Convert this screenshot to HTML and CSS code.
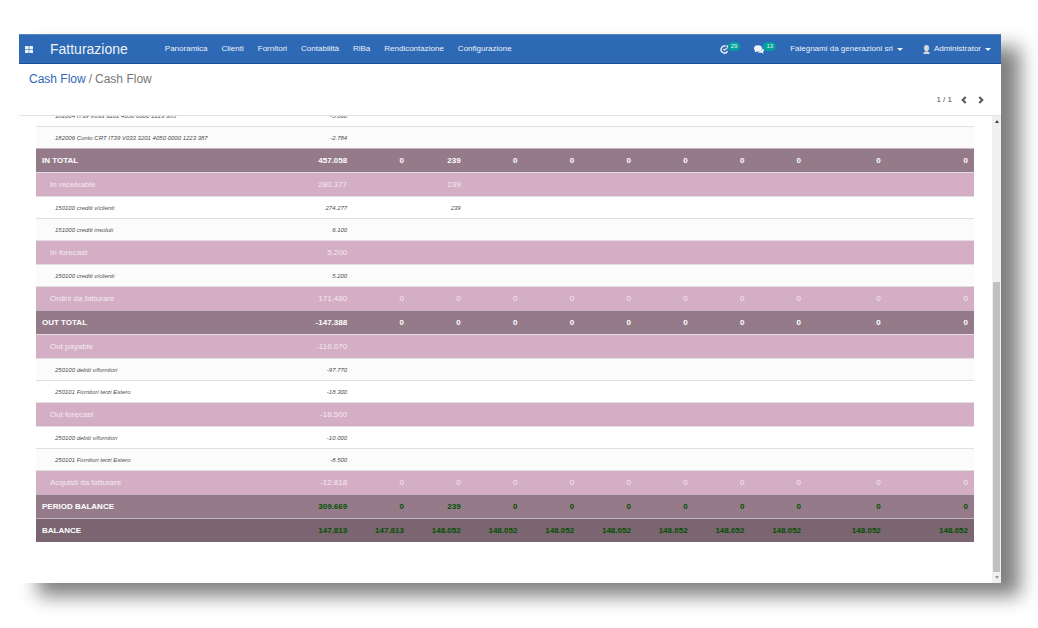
FILE: index.html
```html
<!DOCTYPE html>
<html lang="it">
<head>
<meta charset="utf-8">
<title>Fatturazione - Cash Flow</title>
<link rel="stylesheet" href="styles.css">
</head>
<body>
<div class="window">
  <header class="navbar">
    <button class="apps" aria-label="Applicazioni">
      <svg width="8" height="7" viewBox="0 0 8 7" fill="currentColor"><rect width="3.700" height="3.200" rx=".5"/><rect x="4.300" width="3.700" height="3.200" rx=".5"/><rect y="3.800" width="3.700" height="3.200" rx=".5"/><rect x="4.300" y="3.800" width="3.700" height="3.200" rx=".5"/></svg>
    </button>
    <a class="brand" href="#">Fatturazione</a>
    <nav class="menu">
      <a href="#">Panoramica</a>
      <a href="#">Clienti</a>
      <a href="#">Fornitori</a>
      <a href="#">Contabilità</a>
      <a href="#">RiBa</a>
      <a href="#">Rendicontazione</a>
      <a href="#">Configurazione</a>
    </nav>
    <div class="systray">
      <button class="tray" aria-label="Attività">
        <svg width="9" height="9" viewBox="0 0 9 9" fill="none" stroke="currentColor"><path d="M5.600 1.200A3.500 3.500 0 1 0 7.600 6.200" stroke-width="1.400"/><path d="M3.300 4l1.100 1.200L7.600 2.600" stroke-width="1.100"/><path d="M5.500.3 8 .5 7.800 3z" fill="currentColor" stroke="none"/></svg>
        <span class="badge">29</span>
      </button>
      <button class="tray" aria-label="Messaggi">
        <svg width="10" height="9" viewBox="0 0 10 9" fill="currentColor"><ellipse cx="4" cy="3.400" rx="4" ry="3.100"/><path d="M1.600 5 .8 7.400 4 6z"/><path d="M8.400 3.200C10.300 4 10.400 6 9 7l.7 1.700L7.400 7.800C5.600 8 4.300 7.500 3.800 6.900 6.600 6.900 8.500 5.500 8.400 3.200z"/></svg>
        <span class="badge">13</span>
      </button>
      <button class="drop company">Falegnami da generazioni srl <i class="caret"></i></button>
      <button class="drop user">
        <svg width="7" height="9" viewBox="0 0 7 9" fill="#d5d9df"><ellipse cx="3.500" cy="3" rx="2.600" ry="3"/><path d="M2.300 5h2.400v1.600H2.300z"/><path d="M.3 9C.3 7 1.500 6.400 3.500 6.400S6.700 7 6.700 9z"/></svg>
        Administrator <i class="caret"></i></button>
    </div>
  </header>

  <section class="control-panel">
    <nav class="breadcrumb"><a href="#">Cash Flow</a><span>/</span><span>Cash Flow</span></nav>
    <div class="pager">
      <span>1 / 1</span>
      <button aria-label="Precedente"><svg width="6" height="8" viewBox="0 0 6 8"><path d="M4.700 1 1.700 4l3 3"/></svg></button>
      <button aria-label="Successivo"><svg width="6" height="8" viewBox="0 0 6 8"><path d="M1.300 1l3 3-3 3"/></svg></button>
    </div>
  </section>

  <main class="content">
    <div class="report">
      <table class="cashflow">
        <colgroup>
          <col class="col-name"><col class="col-period" span="9"><col class="col-wide"><col class="col-last">
        </colgroup>
        <tbody></tbody>
      </table>
    </div>
    <div class="scrollbar" aria-hidden="true"><i class="arrow up"></i><i class="track"></i><i class="thumb"></i><i class="arrow down"></i></div>
  </main>
</div>
<script src="report.js"></script>
</body>
</html>
```
FILE: report.js
```js
const zeros = n => Array(n).fill("0");
const lines = [
  ["detail", "182004 IT39 V033 3201 4050 0000 1223 385", "-5.000"],
  ["detail alt", "182006 Conto CRT IT39 V033 3201 4050 0000 1223 387", "-2.784"],
  ["total", "IN TOTAL", "457.058", "0", "239", ...zeros(8)],
  ["group", "In receivable", "280.377", "", "239"],
  ["detail", "150100 crediti v/clienti", "274.277", "", "239"],
  ["detail alt", "151000 crediti insoluti", "6.100"],
  ["group", "In forecast", "5.200"],
  ["detail alt", "150100 crediti v/clienti", "5.200"],
  ["group", "Ordini da fatturare", "171.480", ...zeros(10)],
  ["total", "OUT TOTAL", "-147.388", ...zeros(10)],
  ["group", "Out payable", "-116.070"],
  ["detail alt", "250100 debiti v/fornitori", "-97.770"],
  ["detail", "250101 Fornitori terzi Estero", "-18.300"],
  ["group", "Out forecast", "-18.500"],
  ["detail", "250100 debiti v/fornitori", "-10.000"],
  ["detail alt", "250101 Fornitori terzi Estero", "-8.500"],
  ["group", "Acquisti da fatturare", "-12.818", ...zeros(10)],
  ["total positive", "PERIOD BALANCE", "309.669", "0", "239", ...zeros(8)],
  ["total positive balance", "BALANCE", "147.813", "147.813", ...Array(9).fill("148.052")]
];

const COLUMNS = 11;
const body = document.querySelector(".cashflow tbody");
body.replaceChildren(...lines.map(([kind, name, ...values]) => {
  const row = document.createElement("tr");
  row.className = kind;
  const head = document.createElement("th");
  head.scope = "row";
  head.textContent = name;
  row.append(head);
  for (let i = 0; i < COLUMNS; i++) {
    const cell = document.createElement("td");
    cell.textContent = values[i] || "";
    row.append(cell);
  }
  return row;
}));
```
FILE: styles.css
```css
* { box-sizing: border-box; }

body {
  margin: 0;
  min-height: 100vh;
  padding: 34px 37px 45px 19px;
  display: flex;
  background: #fff;
  color: #4c4c4c;
  font: 8px/12px "Liberation Sans", Arial, sans-serif;
}

a { color: inherit; text-decoration: none; }
button { border: 0; padding: 0; background: none; color: inherit; font: inherit; cursor: pointer; }
svg { display: block; }

.window {
  flex: 1;
  min-width: 0;
  display: flex;
  flex-direction: column;
  background: #fff;
  box-shadow: 19px 13px 18px #808080;
}

.navbar {
  height: 30px;
  display: flex;
  align-items: center;
  padding: 0 10px 0 6px;
  background: #2d69b5;
  border-top: 1px solid #5585c3;
  border-bottom: 1px solid #1d4f94;
  color: #eef2f8;
}
.brand { margin-left: 17px; font-size: 14px; line-height: 20px; }
.menu { display: flex; gap: 14px; margin-left: 37px; }
.systray { display: flex; align-items: center; margin-left: auto; }
.tray { display: flex; align-items: center; margin-right: 14px; }
.badge {
  margin: 0 0 5px -1px;
  padding: 0 3px;
  border-radius: 5px;
  background: #00a09d;
  font-size: 6px;
  line-height: 9px;
}
.drop { display: flex; align-items: center; gap: 4px; }
.user { margin-left: 20px; }
.caret {
  border: 3px solid transparent;
  border-top-color: currentColor;
  border-bottom-width: 0;
}

.control-panel {
  height: 52px;
  padding: 7px 17px 9px 10px;
  display: flex;
  flex-direction: column;
  justify-content: space-between;
  border-bottom: 1px solid #e3e3e3;
}
.breadcrumb { display: flex; gap: 3px; font-size: 12px; line-height: 16px; color: #777; }
.breadcrumb a { color: #2d69b5; }
.pager { display: flex; align-items: center; align-self: flex-end; gap: 11px; }
.pager span { margin-right: -2px; }
.pager path { fill: none; stroke: #555; stroke-width: 2; }

.content { flex: 1; display: flex; min-height: 0; }
.report { flex: 1; min-width: 0; padding: 0 18px 41px 17px; overflow: hidden; }

.cashflow {
  width: 100%;
  margin-top: -12px;
  table-layout: fixed;
  border-collapse: separate;
  border-spacing: 0;
}
.col-period { width: 6.05%; }
.col-wide { width: 8.5%; }
.col-last { width: 9.3%; }
.cashflow th, .cashflow td {
  height: 24px;
  padding: 0 6px;
  text-align: right;
  font-weight: normal;
  white-space: nowrap;
  border-top: 1px solid #e2dfe2;
}
.cashflow th { text-align: left; }

.detail { font-size: 6px; font-style: italic; }
.cashflow .detail th, .cashflow .detail td { height: 22px; }
.cashflow .detail th { padding-left: 19px; }
.alt { background: #fbfbfb; }
.group { background: #d4aec4; color: #f4e9f0; }
.cashflow .group th { padding-left: 14px; }
.total { background: #957b89; color: #fff; }
.cashflow .total th, .cashflow .total td { font-weight: bold; border-top-color: #c3b4bd; }
.balance { background: #7b6570; }
.positive td { color: #005000; }

.scrollbar {
  width: 9px;
  display: flex;
  flex-direction: column;
  align-items: center;
  background: #f0f0f0;
}
.arrow { margin: 4px 0; border: 2px solid transparent; }
.up { border-top-width: 0; border-bottom: 3px solid #444; }
.down { border-bottom-width: 0; border-top: 3px solid #999; }
.track { flex: 155; }
.thumb { flex: 291; width: 7px; background: #c0c0c0; }
```
